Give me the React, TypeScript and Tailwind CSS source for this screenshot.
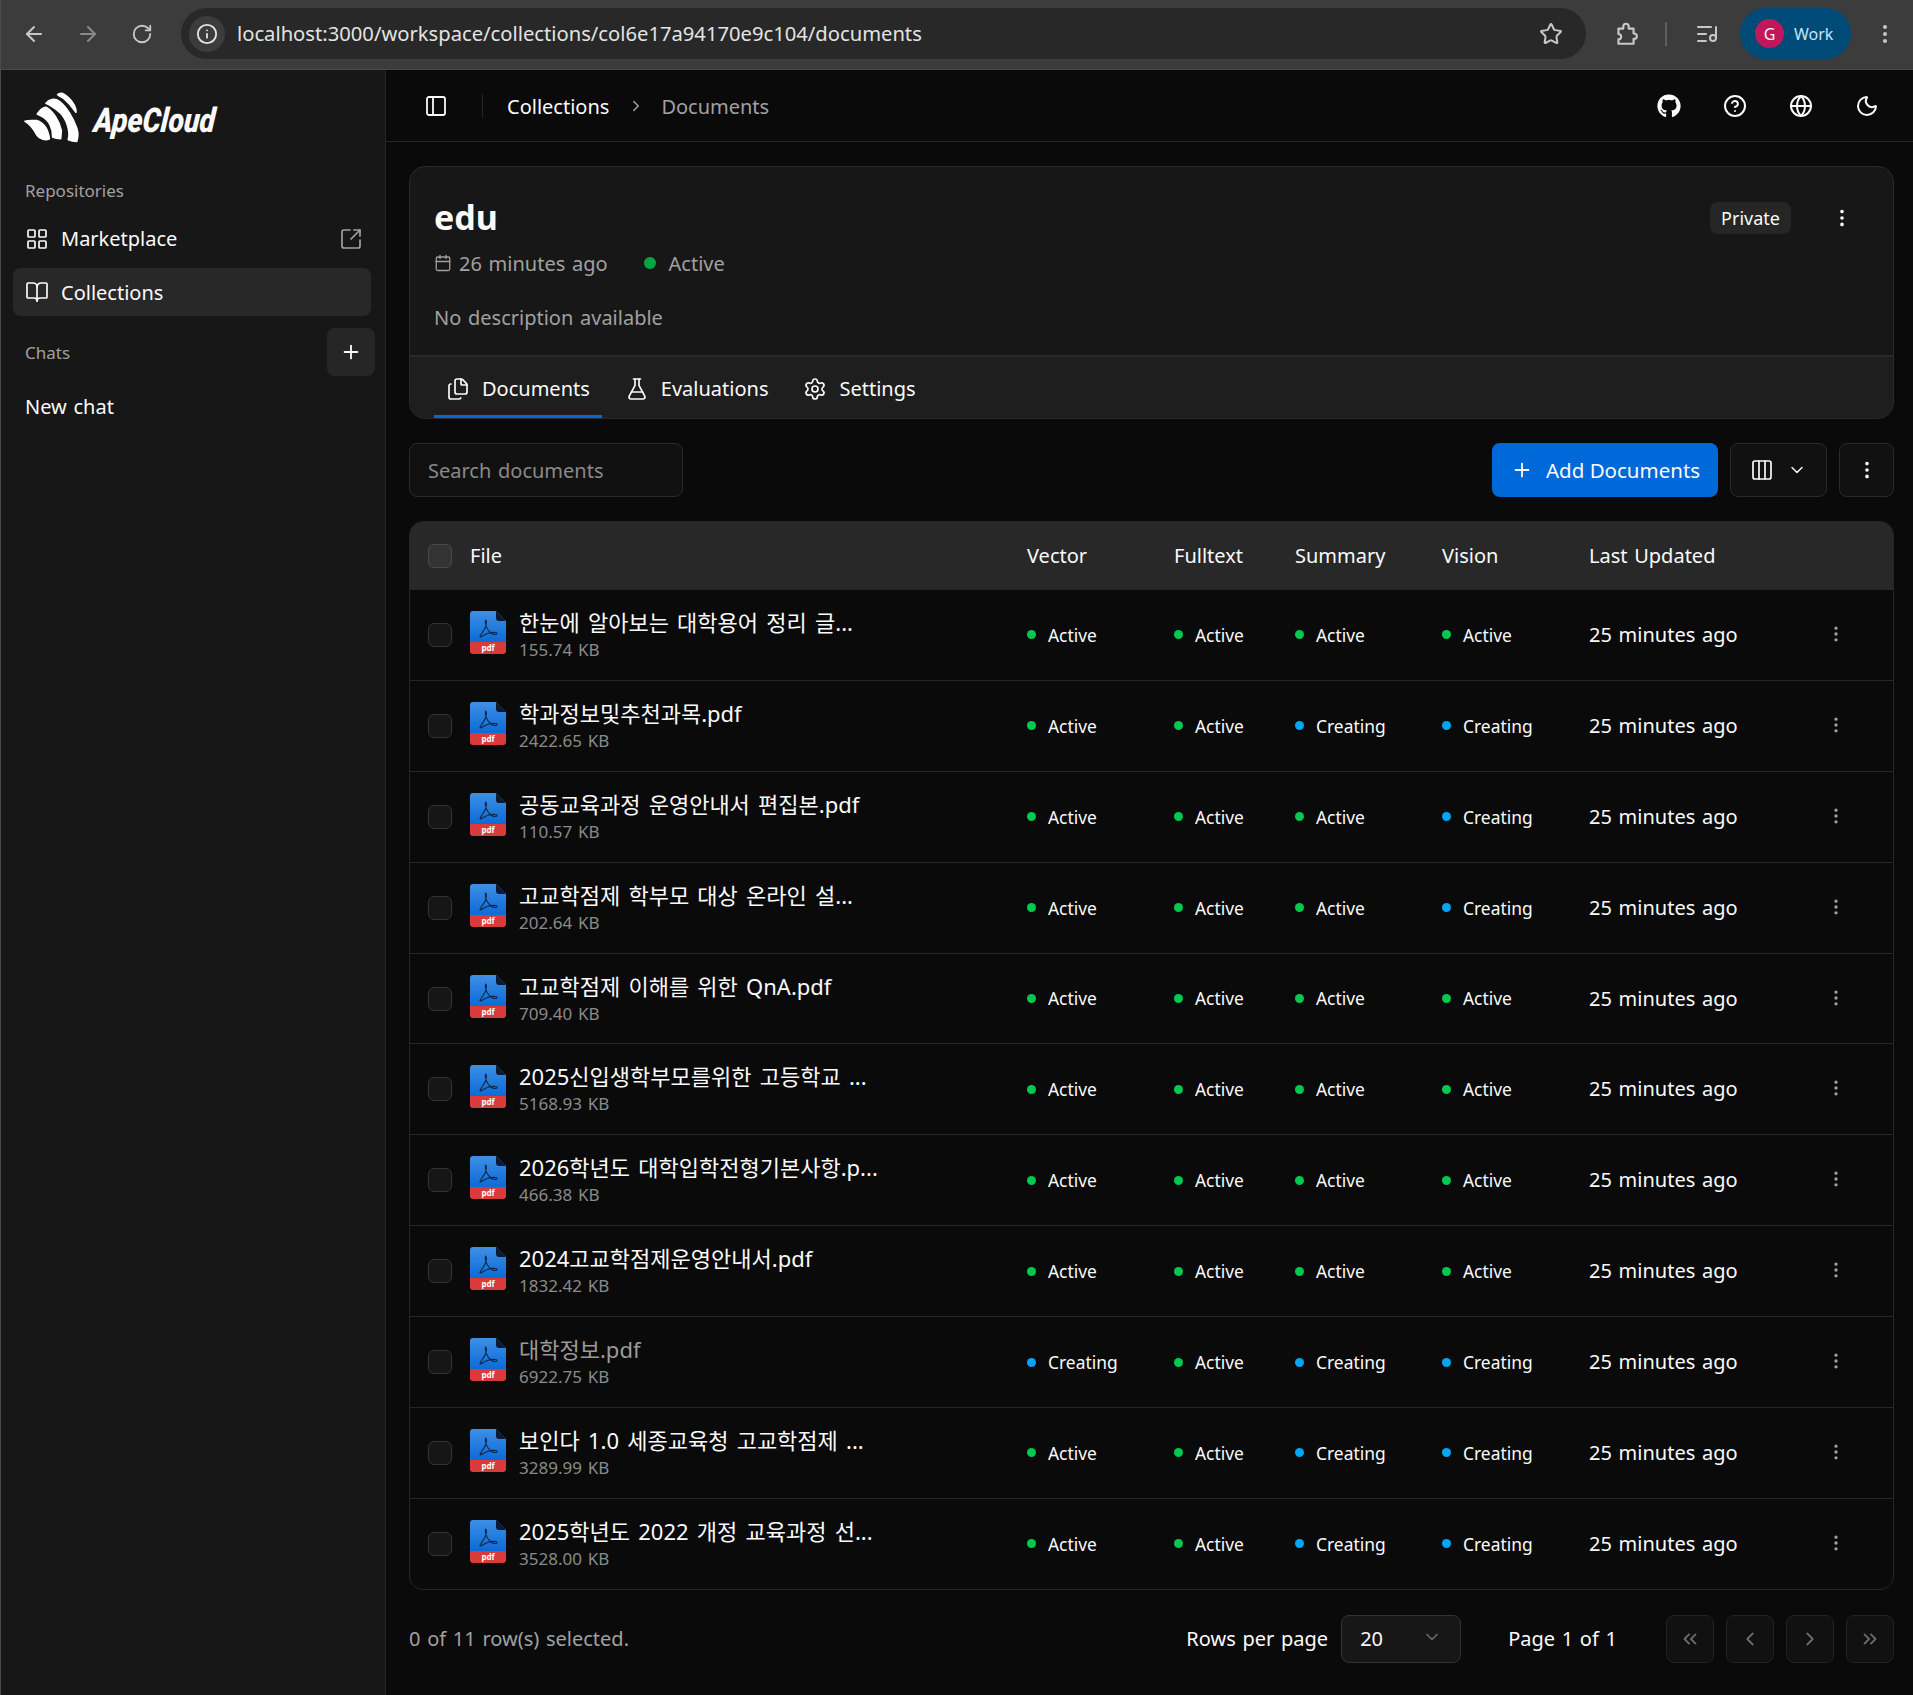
import React from 'react';
import {
  ArrowLeft, ArrowRight, RotateCw, Info, Star, EllipsisVertical, ListMusic, PanelLeft, ChevronRight,
  CircleHelp, Globe, Moon, LayoutGrid, SquareArrowOutUpRight, BookOpen, Plus, Calendar, Files, FlaskConical,
  Settings, Columns3, ChevronDown, ChevronsLeft, ChevronLeft, ChevronsRight,
} from 'lucide-react';
import { FaGithub } from 'react-icons/fa';

type Status = 'Active' | 'Creating';

interface Row {
  name: string;
  size: string;
  status: [Status, Status, Status, Status];
  muted?: boolean;
}

const A: Status = 'Active';
const C: Status = 'Creating';

const rows: Row[] = [
  { name: '한눈에 알아보는 대학용어 정리 글...', size: '155.74 KB', status: [A, A, A, A] },
  { name: '학과정보및추천과목.pdf', size: '2422.65 KB', status: [A, A, C, C] },
  { name: '공동교육과정 운영안내서 편집본.pdf', size: '110.57 KB', status: [A, A, A, C] },
  { name: '고교학점제 학부모 대상 온라인 설...', size: '202.64 KB', status: [A, A, A, C] },
  { name: '고교학점제 이해를 위한 QnA.pdf', size: '709.40 KB', status: [A, A, A, A] },
  { name: '2025신입생학부모를위한 고등학교 ...', size: '5168.93 KB', status: [A, A, A, A] },
  { name: '2026학년도 대학입학전형기본사항.p...', size: '466.38 KB', status: [A, A, A, A] },
  { name: '2024고교학점제운영안내서.pdf', size: '1832.42 KB', status: [A, A, A, A] },
  { name: '대학정보.pdf', size: '6922.75 KB', status: [C, A, C, C], muted: true },
  { name: '보인다 1.0 세종교육청 고교학점제 ...', size: '3289.99 KB', status: [A, A, C, C] },
  { name: '2025학년도 2022 개정 교육과정 선...', size: '3528.00 KB', status: [A, A, C, C] },
];

const PdfIcon = () => (
  <svg width="36" height="43" viewBox="0 0 36 43" className="shrink-0 -translate-y-[2px]">
    <defs>
      <linearGradient id="pdfBlue" x1="0" y1="0" x2="0" y2="1">
        <stop offset="0" stopColor="#3f8fe6" />
        <stop offset="1" stopColor="#0b6bd6" />
      </linearGradient>
    </defs>
    <path d="M3 0H26L36 10V31H0V3A3 3 0 0 1 3 0Z" fill="url(#pdfBlue)" />
    <path d="M26 0L36 10H29A3 3 0 0 1 26 7Z" fill="#0b1a33" />
    <path d="M0 31H36V40A3 3 0 0 1 33 43H3A3 3 0 0 1 0 40Z" fill="#d93a3a" />
    <path
      d="M15.5 9C14.5 13 17 19 21 22C23.5 24 27 24 27 22.5C27 21 22 21 17.5 22.5C13 24 10 27 10 25.5C10 24 14 20 15.5 16C17 12 16.5 9 15.5 9Z"
      fill="none"
      stroke="#0f2747"
      strokeWidth="1.1"
    />
    <text x="18" y="40" textAnchor="middle" fontSize="8" fontWeight="700" fill="#fff" fontFamily="Noto Sans, sans-serif">
      pdf
    </text>
  </svg>
);

const Logo = () => (
  <div className="flex items-center -ml-[5px]">
    <svg width="65" height="60" viewBox="0 0 195 180" className="shrink-0" fill="#fff" stroke="#fff" strokeWidth="5" strokeLinejoin="round">
      <path d="M113 20C122 12 135 18 148 32C160 44 168 56 168 73C158 58 146 44 132 32C126 27 118 25 113 20Z" />
      <path d="M78 46C88 34 104 30 118 40C140 56 160 92 170 120C175 136 174 150 170 160C160 160 152 158 145 155C152 130 140 92 118 72C106 62 92 52 78 46Z" />
      <path d="M52 78C60 66 68 58 78 58C100 70 118 100 124 128L122 152C112 152 104 150 98 147C100 125 88 95 64 84C60 82 56 80 52 78Z" />
      <path d="M15 100C28 96 40 98 50 98C70 104 84 125 88 152C78 158 60 155 50 140C42 125 30 108 15 100Z" />
    </svg>
    <span className="ml-[9px] mt-[3px] text-[34px] font-black italic text-[#fafafa] leading-none -skew-x-6 font-['Roboto',sans-serif] scale-x-[0.84] origin-left">
      ApeCloud
    </span>
  </div>
);

const PuzzleIcon = () => (
  <svg width="26" height="26" viewBox="0 0 24 24" fill="none" stroke="#c7c7c7" strokeWidth="2" strokeLinejoin="round" className="ml-[27px] shrink-0">
    <path d="M5 7h4.5V5a2.5 2.5 0 0 1 5 0v2H19v4.5h.5a2.5 2.5 0 0 1 0 5H19V21H5v-4a2.5 2.5 0 0 0 0-5Z" />
  </svg>
);

const Dot = ({ status }: { status: Status }) => (
  <span className={`w-[9px] h-[9px] rounded-full shrink-0 ${status === 'Active' ? 'bg-[#00c950]' : 'bg-[#00a6f4]'}`} />
);

const Check = ({ header }: { header?: boolean }) => (
  <span className={`block w-6 h-6 rounded-md border ${header ? 'border-[#4a4a4a] bg-[#333333]' : 'border-[#333333] bg-[#161616]'}`} />
);

const PagerButton = ({ children }: { children: React.ReactNode }) => (
  <button className="w-[48px] h-[48px] rounded-lg border border-[#222222] bg-[#111111] flex items-center justify-center text-[#6b6b6b]">
    {children}
  </button>
);

const BrowserBar = () => (
  <div className="h-[70px] bg-[#3c3c3c] border-b border-[#4a4a4a] flex items-center pl-[21px] pb-[2px] shrink-0 [word-spacing:0]">
    <ArrowLeft size={24} className="text-[#c7c7c7]" />
    <ArrowRight size={24} className="text-[#8a8a8a] ml-[30px]" />
    <RotateCw size={22} className="text-[#c7c7c7] ml-[31px]" />
    <div className="ml-[28px] w-[1405px] h-[51px] rounded-full bg-[#282828] flex items-center pl-[8px] pr-[23px] shrink-0">
      <span className="w-[36px] h-[36px] rounded-full bg-[#3c3c3c] flex items-center justify-center">
        <Info size={22} className="text-[#e3e3e3]" />
      </span>
      <span className="ml-[12px] text-[20.2px] text-[#e3e3e3] flex-1">localhost:3000/workspace/collections/col6e17a94170e9c104/documents</span>
      <Star size={24} className="text-[#c7c7c7]" />
    </div>
    <PuzzleIcon />
    <span className="w-[2px] h-[24px] bg-[#5f5f5f] ml-[26px]" />
    <ListMusic size={24} className="text-[#c7c7c7] ml-[28px]" />
    <div className="ml-[21px] w-[111px] h-[51px] rounded-full bg-[#004a77] flex items-center pl-[15px] shrink-0">
      <span className="w-[29px] h-[29px] rounded-full bg-[#c2185b] flex items-center justify-center text-[16px] text-[#f5f5f5]">G</span>
      <span className="ml-[10px] text-[16px] text-[#c2e7ff]">Work</span>
    </div>
    <EllipsisVertical size={24} className="text-[#c7c7c7] ml-[22px]" />
  </div>
);

const Sidebar = () => (
  <aside className="w-[385px] shrink-0 bg-[#171717] border-r border-[#262626] flex flex-col px-[12px]">
    <div className="h-[103px] pt-[18px] pl-[12px]">
      <Logo />
    </div>
    <div className="h-[36px] pl-[12px] flex items-center text-[17px] text-[#a1a1a1]">Repositories</div>
    <div className="mt-[6px] h-[48px] pl-[12px] pr-[10px] flex items-center text-[20px] text-[#fafafa]">
      <LayoutGrid size={24} className="mr-[12px]" strokeWidth={1.7} />
      <span className="flex-1">Marketplace</span>
      <SquareArrowOutUpRight size={24} className="text-[#a1a1a1]" strokeWidth={1.7} />
    </div>
    <div className="mt-[5px] h-[48px] w-[358px] rounded-lg bg-[#282828] pl-[12px] flex items-center text-[20px] text-[#fafafa]">
      <BookOpen size={24} className="mr-[12px]" strokeWidth={1.7} />
      <span className="pt-[2px]">Collections</span>
    </div>
    <div className="mt-[12px] h-[48px] flex items-center justify-between pl-[12px] text-[17px] text-[#a1a1a1]">
      <span className="pt-[2px]">Chats</span>
      <span className="w-[48px] h-[48px] rounded-lg bg-[#262626] flex items-center justify-center text-[#fafafa] mr-[-2px]">
        <Plus size={22} />
      </span>
    </div>
    <div className="mt-[7px] h-[48px] pl-[12px] flex items-center text-[20px] text-[#fafafa]">New chat</div>
  </aside>
);

const TopBar = () => (
  <header className="h-[72px] shrink-0 border-b border-[#262626] flex items-center pl-[38px] pr-[34px]">
    <PanelLeft size={24} className="text-[#fafafa]" strokeWidth={1.8} />
    <span className="w-px h-[24px] bg-[#262626] ml-[34px] mr-[24px]" />
    <span className="text-[20px] text-[#fafafa] pt-[2px]">Collections</span>
    <ChevronRight size={18} className="text-[#a1a1a1] ml-[18px] mr-[16px]" />
    <span className="text-[20px] text-[#a1a1a1] pt-[2px]">Documents</span>
    <div className="ml-auto flex items-center gap-[42px] text-[#fafafa]">
      <FaGithub size={24} />
      <CircleHelp size={24} />
      <Globe size={24} />
      <Moon size={24} />
    </div>
  </header>
);

const Card = () => (
  <section className="h-[253px] rounded-[16px] border border-[#2a2a2a] bg-[#171717] flex flex-col overflow-hidden">
    <div className="h-[190px] border-b-2 border-[#2a2a2a] pl-[24px] pr-[40px] pt-[24px] flex justify-between">
      <div>
        <h1 className="text-[34px] leading-[48px] pt-[2px] font-bold text-[#fafafa]">edu</h1>
        <div className="mt-[7px] flex items-center text-[20px] leading-[32px] text-[#a1a1a1]">
          <Calendar size={18} strokeWidth={1.7} className="mr-[7px] -mt-[2px]" />
          <span>26 minutes ago</span>
          <span className="w-3 h-3 rounded-full bg-[#00a63e] ml-[36px] mr-[13px] -mt-[2px]" />
          <span>Active</span>
        </div>
        <p className="mt-[22px] text-[20px] leading-[32px] text-[#a1a1a1]">No description available</p>
      </div>
      <div className="flex items-center h-[32px] mt-[11px]">
        <span className="h-[32px] w-[81px] justify-center rounded-lg bg-[#262626] text-[18px] text-[#fafafa] flex items-center">Private</span>
        <EllipsisVertical size={22} className="text-[#fafafa] ml-[40px]" />
      </div>
    </div>
    <div className="flex-1 bg-[#1e1e1e] pl-[24px] flex items-stretch text-[20px] text-[#fafafa]">
      <div className="flex items-center gap-[12px] px-[12px] border-b-[3px] border-[#0a66d4] pt-[5px]">
        <Files size={24} strokeWidth={1.7} />
        <span>Documents</span>
      </div>
      <div className="flex items-center gap-[12px] px-[12px] ml-[11px] pt-[2px]">
        <FlaskConical size={24} strokeWidth={1.7} />
        <span>Evaluations</span>
      </div>
      <div className="flex items-center gap-[12px] px-[12px] ml-[11px] pt-[2px]">
        <Settings size={24} strokeWidth={1.7} />
        <span>Settings</span>
      </div>
    </div>
  </section>
);

const Toolbar = () => (
  <div className="mt-[24px] h-[54px] flex items-stretch">
    <div className="w-[274px] rounded-lg border border-[#2a2a2a] bg-[#111111] pl-[18px] pt-[2px] flex items-center text-[20px] text-[#8a8a8a]">
      Search documents
    </div>
    <button className="ml-auto w-[226px] rounded-lg bg-[#0069d9] flex items-center pl-[19px] text-[20.5px] text-[#fafafa]">
      <Plus size={22} className="mr-[13px]" />
      Add Documents
    </button>
    <button className="ml-[12px] w-[97px] rounded-lg border border-[#2a2a2a] bg-[#111111] flex items-center justify-center gap-[13px] text-[#fafafa]">
      <Columns3 size={24} strokeWidth={1.7} />
      <ChevronDown size={20} strokeWidth={1.7} />
    </button>
    <button className="ml-[12px] w-[55px] rounded-lg border border-[#2a2a2a] bg-[#111111] flex items-center justify-center text-[#fafafa]">
      <EllipsisVertical size={22} />
    </button>
  </div>
);

const StatusCell = ({ status }: { status: Status }) => (
  <div className="flex items-center gap-[12px] text-[17.4px] text-[#fafafa]">
    <Dot status={status} />
    <span>{status}</span>
  </div>
);

const gridCols = 'grid grid-cols-[60px_557px_147px_121px_147px_147px_1fr] items-center';

const DocsTable = () => (
  <div className="mt-[24px] rounded-[14px] border border-[#262626] overflow-hidden">
    <div className={`${gridCols} h-[67px] bg-[#282828] text-[20px] text-[#fafafa]`}>
      <div className="pl-[18px]"><Check header /></div>
      <div>File</div>
      <div>Vector</div>
      <div>Fulltext</div>
      <div>Summary</div>
      <div>Vision</div>
      <div>Last Updated</div>
    </div>
    {rows.map((row) => (
      <div key={row.name} className={`${gridCols} h-[90.9px] border-t border-[#262626]`}>
        <div className="pl-[18px]"><Check /></div>
        <div className="flex items-center gap-[13px] -mt-[1px]">
          <PdfIcon />
          <div>
            <div className={`text-[22px] leading-[28px] pb-[2px] whitespace-nowrap [word-spacing:2.5px] ${row.muted ? 'text-[#9a9a9a]' : 'text-[#fafafa]'}`}>{row.name}</div>
            <div className="text-[17px] leading-[23px] text-[#8a8a8a]">{row.size}</div>
          </div>
        </div>
        {row.status.map((s, i) => (
          <StatusCell key={i} status={s} />
        ))}
        <div className="flex items-center">
          <span className="text-[20px] text-[#fafafa] whitespace-nowrap">25 minutes ago</span>
          <EllipsisVertical size={20} className="text-[#a1a1a1] ml-[88px] -mt-[2px]" />
        </div>
      </div>
    ))}
  </div>
);

const Footer = () => (
  <div className="mt-[25px] h-[48px] flex items-center text-[20px] text-[#fafafa]">
    <span className="text-[#a1a1a1]">0 of 11 row(s) selected.</span>
    <span className="ml-auto">Rows per page</span>
    <div className="ml-[13px] w-[120px] h-[48px] rounded-lg border border-[#333333] bg-[#171717] flex items-center justify-between pl-[18px] pr-[18px]">
      <span>20</span>
      <ChevronDown size={20} className="text-[#6b6b6b] -mt-[3px]" />
    </div>
    <span className="ml-[47px] mr-[49px]">Page 1 of 1</span>
    <div className="flex items-center gap-[12px]">
      <PagerButton><ChevronsLeft size={22} /></PagerButton>
      <PagerButton><ChevronLeft size={22} /></PagerButton>
      <PagerButton><ChevronRight size={22} /></PagerButton>
      <PagerButton><ChevronsRight size={22} /></PagerButton>
    </div>
  </div>
);

export default function App() {
  return (
    <div className="w-[1913px] h-[1695px] flex flex-col border-l border-[#4a4a4a] bg-[#0a0a0a] overflow-hidden [word-spacing:1.5px] font-['Noto_Sans','Noto_Sans_CJK_KR',sans-serif]">
      <BrowserBar />
      <div className="flex flex-1 min-h-0">
        <Sidebar />
        <main className="flex-1 min-w-0 flex flex-col">
          <TopBar />
          <div className="pl-[23px] pr-[19px] pt-[24px] flex flex-col">
            <Card />
            <Toolbar />
            <DocsTable />
            <Footer />
          </div>
        </main>
      </div>
    </div>
  );
}
